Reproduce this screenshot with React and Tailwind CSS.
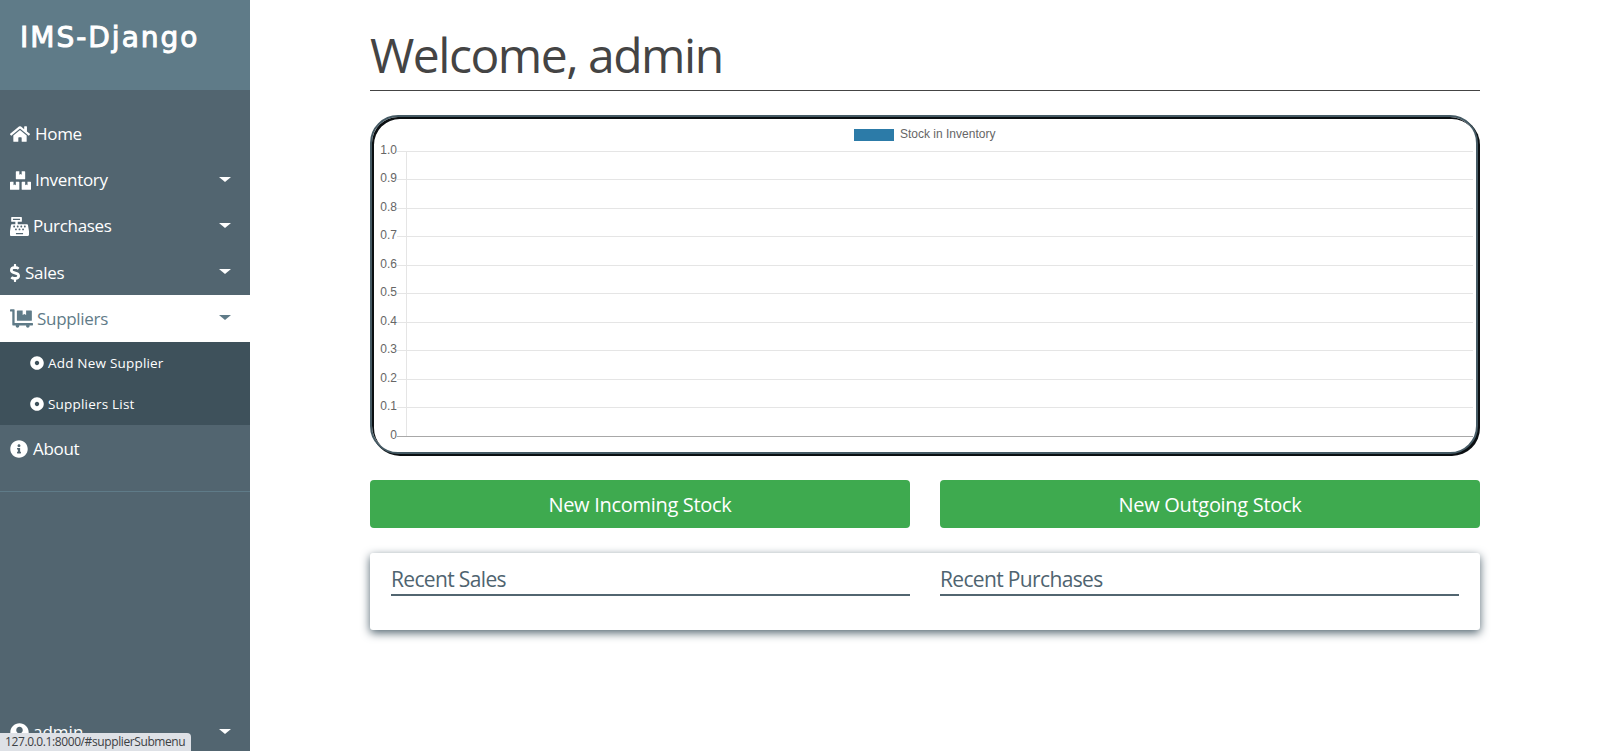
import React from "react";
import { FaHome, FaBoxes, FaCashRegister, FaDollarSign, FaDollyFlatbed, FaDotCircle, FaInfoCircle, FaUserCircle } from "react-icons/fa";

const font = { fontFamily: '"Open Sans", "Noto Sans", sans-serif' };

function Caret({ color = "#ffffff" }) {
  return <span className="ml-auto mr-[19px] mb-[2px] w-0 h-0 border-x-[6px] border-x-transparent border-t-[5px]" style={{ borderTopColor: color }} />;
}

function Item({ icon: Icon, label, caret, size = 18, gap = "mr-[4px]", extra = "", row = "" }) {
  return (
    <a className={`flex items-center h-[46px] pl-[10px] text-white text-[17px] tracking-[-0.3px] ${row}`}>
      <Icon size={size} className={`${gap} shrink-0 ${extra}`} />
      <span>{label}</span>
      {caret && <Caret />}
    </a>
  );
}

function Sub({ label }) {
  return (
    <a className="flex items-center h-[41px] pl-[30px] pt-[1px] text-white text-[13.5px] tracking-[0.2px]">
      <FaDotCircle size={14} className="mr-[4px] shrink-0" />
      <span>{label}</span>
    </a>
  );
}

function Chart() {
  const labels = ["1.0", "0.9", "0.8", "0.7", "0.6", "0.5", "0.4", "0.3", "0.2", "0.1", "0"];
  const font = '"Liberation Sans", Arial, sans-serif';
  return (
    <svg width="1104" height="335" viewBox="0 0 1104 335" className="block">
      <rect x="482" y="12" width="40" height="12" fill="#2c7ba8" />
      <text x="528" y="21" fontFamily={font} fontSize="12" fill="#666">Stock in Inventory</text>
      <line x1="34.5" y1="34" x2="34.5" y2="319" stroke="#e5e5e5" />
      {labels.map((l, i) => {
        const y = Math.floor(34 + i * 28.5) + 0.5;
        const last = i === labels.length - 1;
        return (
          <g key={l}>
            <line x1="25" x2="1101" y1={y} y2={y} stroke={last ? "#a8a8a8" : "#e5e5e5"} />
            <text x="25" y={y + 2} textAnchor="end" fontFamily={font} fontSize="12" fill="#666">{l}</text>
          </g>
        );
      })}
    </svg>
  );
}

function Recent({ title }) {
  return (
    <div className="flex-1">
      <h4 className="text-[#4f6470] text-[21px] leading-[30px] border-b-2 border-[#526570] tracking-[-0.65px]">{title}</h4>
    </div>
  );
}

export default function App() {
  return (
    <div className="flex h-[751px] overflow-hidden bg-white" style={font}>
      <aside className="relative flex flex-col w-[250px] shrink-0 bg-[#526570]">
        <div className="h-[90px] bg-[#5f7b88] pl-[20px] pt-[20px]">
          <div className="text-white text-[28px] leading-[36px] tracking-[2px] [-webkit-text-stroke:1px_white]" style={{ fontFamily: '"DejaVu Sans", sans-serif' }}>IMS-Django</div>
        </div>
        <nav className="flex flex-col pt-[21px]">
          <Item icon={FaHome} label="Home" size={20} gap="mr-[5px]" />
          <Item icon={FaBoxes} label="Inventory" caret size={21} />
          <Item icon={FaCashRegister} label="Purchases" caret size={19} />
          <Item icon={FaDollarSign} label="Sales" caret size={18} extra="w-[10px]" gap="mr-[5px]" row="pt-[1px]" />
          <a className="flex items-center h-[47px] pl-[10px] bg-white text-[#5f7b88] text-[17px] tracking-[-0.3px]">
            <FaDollyFlatbed size={23} className="mr-[4px] shrink-0" />
            <span>Suppliers</span>
            <Caret color="#5f7b88" />
          </a>
          <div className="flex flex-col bg-[#3e515b] h-[83px]">
            <Sub label="Add New Supplier" />
            <Sub label="Suppliers List" />
          </div>
          <Item icon={FaInfoCircle} label="About" size={18} gap="mr-[5px]" row="mt-[1px]" />
          <div className="mt-[19px] h-px bg-[#5f7b88]" />
        </nav>
        <a className="mt-auto flex items-center h-[46px] pl-[10px] text-white text-[17px] -mb-[4px]">
          <FaUserCircle size={19} className="mr-[4px] shrink-0" />
          <span>admin</span>
          <Caret />
        </a>
        <div className="absolute left-0 bottom-0 w-[191px] h-[18px] bg-[#dee1e6] rounded-tr-[4px] text-[#3c4043] text-[12px] leading-[18px] pl-[5px] tracking-[-0.4px] whitespace-nowrap">127.0.0.1:8000/#supplierSubmenu</div>
      </aside>
      <main className="flex-1 px-[120px]">
        <h1 className="h-[91px] pt-[21px] border-b border-[#444] text-[#444] text-[48px] leading-[67px] tracking-[-1.5px]">Welcome, admin</h1>
        <div className="mt-[24px] mr-[2px] h-[339px] rounded-[28px] border-2 border-[#455a64] overflow-hidden shadow-[2px_2px_0_#0b0f12,inset_2px_2px_0_#0b0f12] bg-white">
          <Chart />
        </div>
        <div className="mt-[26px] grid grid-cols-2 gap-[30px]">
          <button className="h-[48px] pt-[2px] rounded-[4px] bg-[#3eaa4f] text-white text-[20px] tracking-[-0.3px]">New Incoming Stock</button>
          <button className="h-[48px] pt-[2px] rounded-[4px] bg-[#3eaa4f] text-white text-[20px] tracking-[-0.3px]">New Outgoing Stock</button>
        </div>
        <div className="mt-[25px] h-[77px] flex gap-[30px] px-[21px] pt-[11px] rounded-[3px] bg-white shadow-[0_3px_10px_#526570]">
          <Recent title="Recent Sales" />
          <Recent title="Recent Purchases" />
        </div>
      </main>
    </div>
  );
}
